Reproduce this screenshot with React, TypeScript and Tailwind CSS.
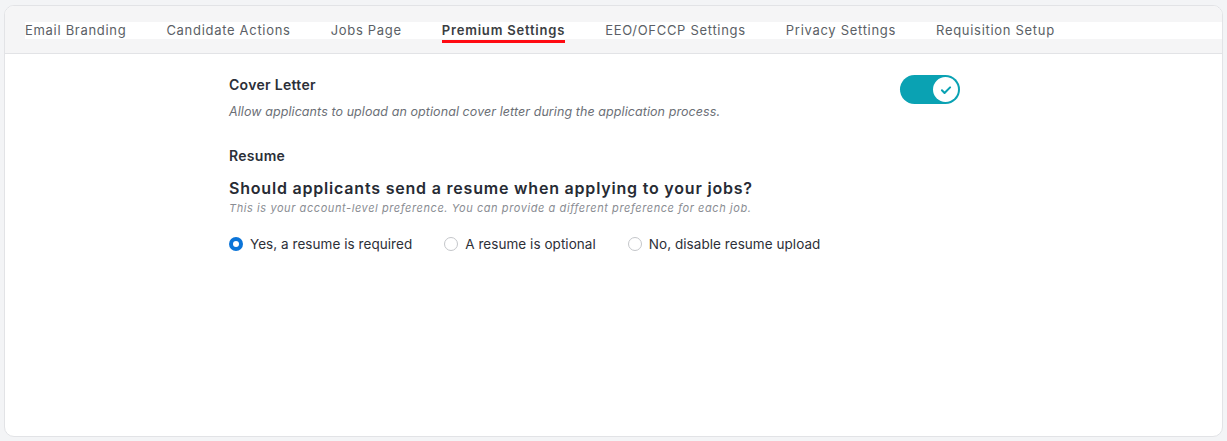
import { useState } from 'react';

const TABS = [
  'Email Branding',
  'Candidate Actions',
  'Jobs Page',
  'Premium Settings',
  'EEO/OFCCP Settings',
  'Privacy Settings',
  'Requisition Setup',
];

const RESUME_OPTIONS = [
  { id: 'required', label: 'Yes, a resume is required' },
  { id: 'optional', label: 'A resume is optional' },
  { id: 'disabled', label: 'No, disable resume upload' },
];

export default function App() {
  const [coverLetter, setCoverLetter] = useState(true);
  const [resume, setResume] = useState('required');

  return (
    <div className="min-h-[441px] bg-[#f3f4f6] px-[4px] pt-[5px] pb-[4px] font-['Inter',sans-serif]">
      <div className="h-[432px] rounded-[10px] border border-[#e2e3e6] bg-white overflow-hidden flex flex-col">
        {/* Tabs */}
        <div className="bg-[#f5f5f6] border-b border-[#e2e3e6] pt-[16px] h-[48px]">
          <div className="ml-[20px] bg-white h-[17px] flex items-center gap-[40px] text-[13px] tracking-[0.7px]">
            {TABS.map(tab => {
              const active = tab === 'Premium Settings';
              return (
                <div key={tab} className="relative">
                  <span className={active ? 'font-semibold text-[#3a3d42] tracking-[0.8px]' : 'text-[#5b5f66]'}>{tab}</span>
                  {active && <div className="absolute left-0 right-0 top-[19px] h-[3px] bg-[#ff0a12]" />}
                </div>
              );
            })}
          </div>
        </div>

        {/* Content */}
        <div className="pl-[224px] pr-[262px] pt-[22px]">
          <div className="flex items-start justify-between">
            <div>
              <h3 className="text-[14px] font-semibold text-[#2b2f38] leading-[18px] tracking-[0.3px]">Cover Letter</h3>
              <p className="mt-[10px] text-[12.5px] italic text-[#6b6f76] leading-[16px] tracking-[0.08px]">
                Allow applicants to upload an optional cover letter during the application process.
              </p>
            </div>
            <button
              onClick={() => setCoverLetter(!coverLetter)}
              className={`mt-[-1px] w-[60px] h-[29px] rounded-full flex items-center px-[2px] ${coverLetter ? 'bg-[#0aa2b3] justify-end' : 'bg-[#c9ccd1] justify-start'}`}
            >
              <span className="w-[25px] h-[25px] rounded-full bg-white flex items-center justify-center">
                {coverLetter && (
                  <svg width="14" height="14" viewBox="0 0 24 24" fill="none" stroke="#0aa2b3" strokeWidth="3.5" strokeLinecap="round" strokeLinejoin="round">
                    <path d="M5 12.5l4.5 4.5L19 7.5" />
                  </svg>
                )}
              </span>
            </button>
          </div>

          <h3 className="mt-[27px] text-[14px] font-semibold text-[#2b2f38] leading-[18px] tracking-[0.3px]">Resume</h3>
          <h2 className="mt-[13px] text-[16px] font-semibold text-[#272b34] leading-[20px] tracking-[0.8px]">
            Should applicants send a resume when applying to your jobs?
          </h2>
          <p className="mt-[3px] text-[11px] italic text-[#8a8d93] leading-[14px] tracking-[0.58px]">
            This is your account-level preference. You can provide a different preference for each job.
          </p>

          <div className="mt-[19px] flex items-center gap-[32px]">
            {RESUME_OPTIONS.map(opt => {
              const checked = resume === opt.id;
              return (
                <label key={opt.id} className="flex items-center gap-[7px] cursor-pointer" onClick={() => setResume(opt.id)}>
                  <span
                    className={`w-[14px] h-[14px] rounded-full flex items-center justify-center ${checked ? 'bg-[#0b74d8]' : 'border border-[#c4c6ca] bg-white'}`}
                  >
                    {checked && <span className="w-[6px] h-[6px] rounded-full bg-white" />}
                  </span>
                  <span className="text-[13.5px] text-[#2d3038] tracking-[0.05px]">{opt.label}</span>
                </label>
              );
            })}
          </div>
        </div>
      </div>
    </div>
  );
}
